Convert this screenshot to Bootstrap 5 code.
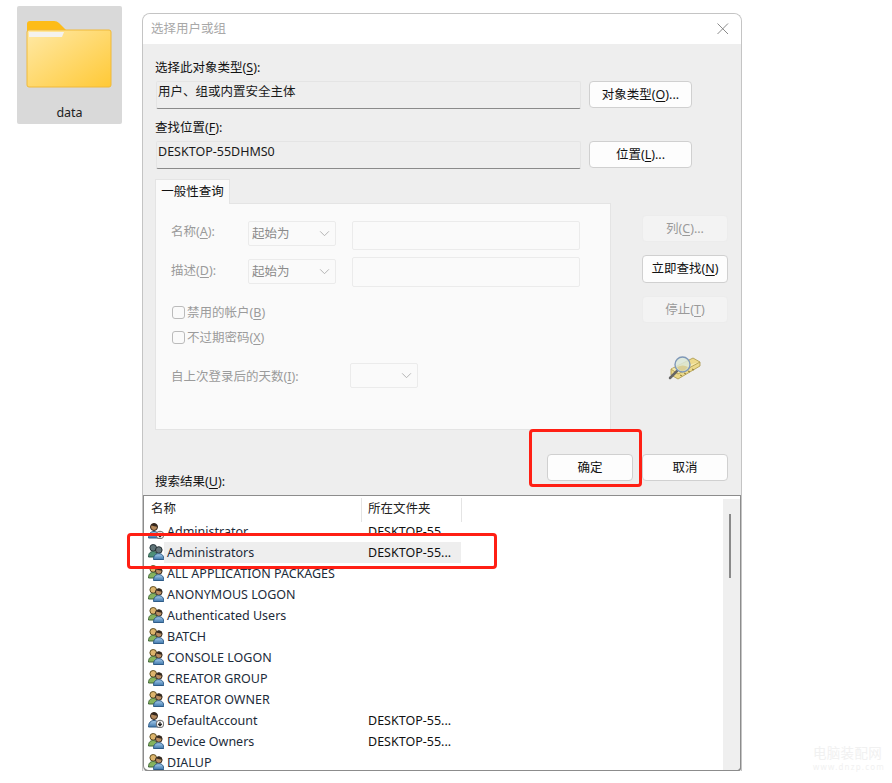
<!DOCTYPE html>
<html lang="zh-CN"><head><meta charset="utf-8"><title>选择用户或组</title>
<link rel="stylesheet" href="https://cdn.jsdelivr.net/npm/bootstrap@5.3.0/dist/css/bootstrap.min.css">
<style>
html,body{height:100%;}
body{position:relative;width:892px;height:783px;overflow:hidden;background:#fff;color:#111;font:12.5px/18px "Noto Sans","Noto Sans CJK SC",sans-serif;}
u{text-underline-offset:2px;text-decoration-thickness:1px;}
.tile{position:absolute;left:17px;top:6px;width:105px;height:118px;background:#d9d9d9;border-radius:2px;}
.tile svg{display:block;margin:13px 0 0 9px;}
.tile-name{margin-top:15px;text-align:center;font-size:12.5px;color:#222;}
.dlg{position:absolute;left:142px;top:13px;width:600px;height:758px;border:1px solid #c4c4c4;border-bottom:0;border-radius:8px 8px 0 0;background:#eee;overflow:hidden;}
.dlg-title{height:30px;background:#fff;padding:0 8px;color:#a8a8a8;font-size:12.5px;line-height:30px;}
.dlg-x{stroke:#8a8a8a;stroke-width:1;fill:none;}
.dlg-body{height:727px;}
.fld-label{padding-left:12px;line-height:18px;}
.lbl-a{height:36px;padding-top:15px;}
.lbl-b{height:32px;padding-top:10px;}
.fld{width:425px;height:28px;margin-left:13px;padding:1px 1px;background:#eee;border:1px solid #e4e4e4;border-bottom:1px solid #8a8a8a;border-radius:2px;line-height:18px;color:#1a1a1a;}
.wbtn.btn{--bs-btn-font-size:12.5px;--bs-btn-line-height:18px;--bs-btn-padding-x:0;--bs-btn-padding-y:3px;--bs-btn-border-radius:4px;--bs-btn-color:#111;--bs-btn-bg:#fdfdfd;--bs-btn-border-color:#d0d0d0;width:86px;height:27px;}
.wbtn.btn:disabled{--bs-btn-disabled-color:#9a9a9a;--bs-btn-disabled-bg:#f3f3f3;--bs-btn-disabled-border-color:#ececec;--bs-btn-disabled-opacity:1;}
.wbtn.wide{width:103px;}
.wbtn.tall{height:28px;}
.top-row{margin-top:1px;}
.mid-row{margin-top:10px;}
.tab-lbl{width:75px;height:25px;margin-left:12px;background:#fafafa;border:1px solid #e4e4e4;border-bottom:0;text-align:center;line-height:24px;color:#111;position:relative;z-index:1;margin-bottom:-1px;}
.panel{width:456px;height:227px;margin-left:12px;background:#fafafa;border:1px solid #e4e4e4;color:#9b9b9b;padding:17px 0 0 15px;}
.q-row{height:29px;margin-bottom:9px;}
.q-row2{margin-bottom:12px;}
.q-lbl{width:77px;padding-top:2px;}
.q-row2 .q-lbl{padding-top:3px;}
.q-sel.form-select{width:88px;height:25px;min-height:0;padding:0 0 0 3px;font-size:12.5px;line-height:23px;color:#8a8a8a;background-color:#fafafa;border:1px solid #ebebeb;border-radius:2px;background-image:url("data:image/svg+xml,%3Csvg xmlns='http://www.w3.org/2000/svg' viewBox='0 0 12 8'%3E%3Cpath fill='none' stroke='%23aaa' d='M1 1.500l5 5 5-5'/%3E%3C/svg%3E");background-position:right 5px center;background-size:11px 7px;}
.q-sel.blank{width:68px;}
.q-inp.form-control{width:228px;height:29px;min-height:0;margin-left:16px;background:#fafafa;border:1px solid #ebebeb;border-radius:2px;}
.q-row2 .q-inp.form-control{margin-top:-2px;height:30px;}
.q-chk{height:25px;}
.q-chk .form-check-input{width:13px;height:13px;margin:0 2px 0 1px;background-color:#fafafa;border:1px solid #bbb;border-radius:3px;opacity:1;}
.q-days{margin-top:13px;}
.q-days-lbl{width:179px;padding-top:5px;}
.side{width:86px;margin-left:31px;padding-top:36px;}
.gap-top{margin-top:13px;}
.side-ico{margin:31px 0 0 25px;display:block;}
.res-row{height:40px;}
.res-label{width:392px;padding:43px 0 0 12px;white-space:nowrap;}
.res-btns{gap:9px;left:404px;top:410px;}
.reslist{position:absolute;left:0;top:451px;width:599px;height:277px;background:#fff;border:1px solid #8c8c8c;border-right:2px solid #8c8c8c;border-bottom:2px solid #8c8c8c;border-radius:0 0 6px 6px;overflow:hidden;}
.scrollb{position:absolute;right:0;top:3px;bottom:0;width:17px;background:#efefef;}
.scroll-thumb{position:absolute;left:6px;top:15px;width:2px;height:64px;background:#8a8a8a;}
.res-head{height:25px;padding-top:2px;color:#222;}
.hc1{width:218px;height:24px;padding:2px 0 0 7px;border-right:1px solid #e4e4e4;}
.hc2{width:100px;height:24px;padding:2px 0 0 6px;border-right:1px solid #e4e4e4;}
.res-r{height:21px;line-height:21px;white-space:nowrap;}
.res-r svg{flex:none;margin:2px 0 0 4px;}
.res-n{width:196px;padding-left:3px;color:#1c2b3a;}
.res-f{padding-left:8px;width:101px;}
.sel-row .res-n,.sel-row .res-f{background:#eee;}
.redbox{position:absolute;border:3px solid #ff1f14;border-radius:4px;pointer-events:none;}
.rb1{left:529px;top:429px;width:113px;height:58px;}
.rb2{left:127px;top:533px;width:370px;height:36px;}
.wm{position:absolute;left:813px;top:746px;color:#f1f1f1;font-size:13.5px;line-height:15px;letter-spacing:.3px;}
.wm div{font-size:8px;line-height:10px;letter-spacing:1.2px;margin-top:1px;}
</style></head><body>
<svg width="0" height="0" class="d-block"><defs>
<linearGradient id="fg" x1="0" y1="0" x2="1" y2="1"><stop offset="0" stop-color="#ffe9a6"/><stop offset="1" stop-color="#ffc936"/></linearGradient>
<linearGradient id="sh2" x1="0" y1="0" x2="0" y2="1"><stop offset="0" stop-color="#a8cdec"/><stop offset="1" stop-color="#3f78ad"/></linearGradient>
<symbol id="grp" viewBox="0 0 16 16">
<circle cx="5.200" cy="3.800" r="3.300" fill="#dcb46c" stroke="#5e4e22"/>
<path d="M.5 13c0-4 2-5.500 4.700-5.500s4.300 1.500 4.300 5.500z" fill="#86b35e" stroke="#3e6535"/>
<circle cx="10.800" cy="6" r="3.300" fill="#b98d62" stroke="#33291f"/>
<path d="M10.800 2.700c2 0 3.300 1.200 3.300 3-1.700-.2-3.900-.6-5.900-1.100.5-1.100 1.400-1.900 2.600-1.900z" fill="#33291f"/>
<path d="M5.500 15.500c0-4 2-5.800 5.300-5.800s5 1.800 5 5.800z" fill="url(#sh2)" stroke="#2f5c88"/>
</symbol>
<symbol id="grpa" viewBox="0 0 16 16">
<circle cx="5.200" cy="3.800" r="3.300" fill="#5f7478" stroke="#26343a"/>
<path d="M.5 13c0-4 2-5.500 4.700-5.500s4.300 1.500 4.300 5.500z" fill="#4f9078" stroke="#2a5648"/>
<circle cx="10.800" cy="6" r="3.300" fill="#66757a" stroke="#232c30"/>
<path d="M5.500 15.500c0-4 2-5.800 5.300-5.800s5 1.800 5 5.800z" fill="url(#sh2)" stroke="#2f5c88"/>
</symbol>
<symbol id="usr" viewBox="0 0 16 16">
<circle cx="6" cy="4" r="3.500" fill="#b58a5c" stroke="#33271d"/>
<path d="M6 .5c2.100 0 3.500 1.300 3.500 3.200-2.200-.2-4.300-.6-6.600-1.400C3.600 1.200 4.700.5 6 .5z" fill="#33271d"/>
<path d="M.5 15c0-4.400 2.300-6.500 5.500-6.500s5.300 2.100 5.300 6.500z" fill="url(#sh2)" stroke="#2f5c88"/>
<circle cx="12" cy="12" r="3.800" fill="#fff" stroke="#666"/>
<path d="M12 9.700v3.600M10.200 11.700l1.800 2 1.800-2" fill="none" stroke="#222" stroke-width="1.300"/>
</symbol>
</defs></svg>

<div class="tile">
<svg width="86" height="70" viewBox="0 0 86 70"><path d="M1 5q0-3 3-3h24q3 0 5 2l8 8v3H1z" fill="#fdbc18"/><path d="M1 13q0-2 2-2H83q2 0 2 2v53q0 2-2 2H3q-2 0-2-2z" fill="url(#fg)" stroke="#f0b93a"/><path d="M3 13h35l-2 5H3z" fill="#f4f2ee"/></svg>
<div class="tile-name">data</div>
</div>

<div class="dlg">
<div class="dlg-title d-flex justify-content-between align-items-center"><span>选择用户或组</span><svg class="me-1" width="12" height="12" viewBox="0 0 12 12"><path class="dlg-x" d="M.5.5l10.500 10.500M11 .5L.5 11"/></svg></div>
<div class="dlg-body position-relative">
<div class="fld-label lbl-a">选择此对象类型(<u>S</u>):</div>
<div class="d-flex top-row"><div class="fld">用户、组或内置安全主体</div><button type="button" class="btn wbtn wide ms-2">对象类型(<u>O</u>)...</button></div>
<div class="fld-label lbl-b">查找位置(<u>F</u>):</div>
<div class="d-flex"><div class="fld">DESKTOP-55DHMS0</div><button type="button" class="btn wbtn wide ms-2">位置(<u>L</u>)...</button></div>
<div class="d-flex mid-row">
 <div>
  <div class="tab-lbl">一般性查询</div>
  <div class="panel">
   <div class="d-flex q-row"><span class="q-lbl">名称(<u>A</u>):</span><select class="form-select q-sel" disabled><option>起始为</option></select><input class="form-control q-inp" disabled></div>
   <div class="d-flex q-row q-row2"><span class="q-lbl">描述(<u>D</u>):</span><select class="form-select q-sel" disabled><option>起始为</option></select><input class="form-control q-inp" disabled></div>
   <div class="d-flex align-items-center q-chk"><input type="checkbox" class="form-check-input" disabled><span>禁用的帐户(<u>B</u>)</span></div>
   <div class="d-flex align-items-center q-chk"><input type="checkbox" class="form-check-input" disabled><span>不过期密码(<u>X</u>)</span></div>
   <div class="d-flex q-days"><span class="q-days-lbl">自上次登录后的天数(<u>I</u>):</span><select class="form-select q-sel blank" disabled><option></option></select></div>
  </div>
 </div>
 <div class="side">
  <button type="button" class="btn wbtn d-block" disabled>列(<u>C</u>)...</button>
  <button type="button" class="btn wbtn tall d-block gap-top">立即查找(<u>N</u>)</button>
  <button type="button" class="btn wbtn d-block gap-top" disabled>停止(<u>T</u>)</button>
  <svg class="side-ico" width="34" height="30" viewBox="0 0 34 30">
   <path d="M4 15l22-11 7 4v4L11 25 4 21z" fill="#ecd98b" stroke="#a89548" stroke-width=".8"/>
   <path d="M4 15l7 5 22-12" fill="#f6e9ad" stroke="#a89548" stroke-width=".8"/>
   <path d="M13 21l2 1M17 19l2 1M21 17l2 1M25 15l2 1" stroke="#8c7a36"/>
   <path d="M10 17L3 24" stroke="#666" stroke-width="2.500" stroke-linecap="round"/>
   <circle cx="15.500" cy="10.500" r="7.500" fill="#dce8d8" fill-opacity=".85" stroke="#7f98b8" stroke-width="1.400"/>
   <path d="M10 13q6-3 11 0-3 4-6 4t-5-4z" fill="#d9cf97"/>
  </svg>
 </div>
</div>
<div class="d-flex res-row"><div class="res-label">搜索结果(<u>U</u>):</div></div>
<div class="d-flex res-btns position-absolute"><button type="button" class="btn wbtn">确定</button><button type="button" class="btn wbtn">取消</button></div>
<div class="reslist">
 <div class="d-flex res-head"><div class="hc1">名称</div><div class="hc2">所在文件夹</div></div>
 <div class="d-flex res-r"><svg width="16" height="16"><use href="#usr"/></svg><div class="res-n">Administrator</div><div class="res-f">DESKTOP-55...</div></div>
 <div class="d-flex res-r sel-row"><svg width="16" height="16"><use href="#grpa"/></svg><div class="res-n">Administrators</div><div class="res-f">DESKTOP-55...</div></div>
 <div class="d-flex res-r"><svg width="16" height="16"><use href="#grp"/></svg><div class="res-n">ALL APPLICATION PACKAGES</div></div>
 <div class="d-flex res-r"><svg width="16" height="16"><use href="#grp"/></svg><div class="res-n">ANONYMOUS LOGON</div></div>
 <div class="d-flex res-r"><svg width="16" height="16"><use href="#grp"/></svg><div class="res-n">Authenticated Users</div></div>
 <div class="d-flex res-r"><svg width="16" height="16"><use href="#grp"/></svg><div class="res-n">BATCH</div></div>
 <div class="d-flex res-r"><svg width="16" height="16"><use href="#grp"/></svg><div class="res-n">CONSOLE LOGON</div></div>
 <div class="d-flex res-r"><svg width="16" height="16"><use href="#grp"/></svg><div class="res-n">CREATOR GROUP</div></div>
 <div class="d-flex res-r"><svg width="16" height="16"><use href="#grp"/></svg><div class="res-n">CREATOR OWNER</div></div>
 <div class="d-flex res-r"><svg width="16" height="16"><use href="#usr"/></svg><div class="res-n">DefaultAccount</div><div class="res-f">DESKTOP-55...</div></div>
 <div class="d-flex res-r"><svg width="16" height="16"><use href="#grp"/></svg><div class="res-n">Device Owners</div><div class="res-f">DESKTOP-55...</div></div>
 <div class="d-flex res-r"><svg width="16" height="16"><use href="#grp"/></svg><div class="res-n">DIALUP</div></div>
 <div class="scrollb"><div class="scroll-thumb"></div></div>
</div>
</div>
</div>
<div class="redbox rb1"></div><div class="redbox rb2"></div>
<div class="wm">电脑装配网<div>www.dnzp.com</div></div>
<script src="https://cdn.jsdelivr.net/npm/bootstrap@5.3.0/dist/js/bootstrap.bundle.min.js"></script>
</body></html>
